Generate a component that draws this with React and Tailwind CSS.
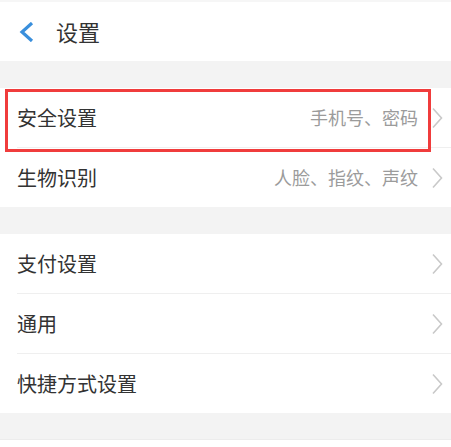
import React from "react";

const ChevronRight = () => (
  <svg width="12" height="22" viewBox="0 0 12 22" className="shrink-0">
    <path d="M2 1.5 L10.5 11 L2 20.5" fill="none" stroke="#c9c9c9" strokeWidth="1.6" />
  </svg>
);

const Row = ({ title, sub, last, highlight }) => (
  <div className="relative bg-white">
    <div className="h-[59px] flex items-center pl-[17px] pr-[8px]">
      <span className="flex-1 text-[20px] text-[#333333]">{title}</span>
      {sub && <span className="text-[18px] text-[#9b9b9b] mr-[13px]">{sub}</span>}
      <ChevronRight />
    </div>
    {!last && <div className="ml-[17px] h-px bg-[#efefef]" />}
    {highlight && (
      <div className="absolute z-10 left-[5px] top-[1px] w-[426px] h-[63px] border-[3px] border-solid border-[#f03c3c] pointer-events-none" />
    )}
  </div>
);

const App = () => {
  return (
    <div
      className="w-[451px] h-[447px] overflow-hidden bg-[#f3f3f3]"
      style={{ fontFamily: '"Noto Sans CJK SC", "Noto Sans", sans-serif' }}
    >
      {/* header */}
      <div className="h-[61px] bg-white flex items-center border-t-2 border-[#f6f6f6]">
        <svg width="16" height="20" viewBox="0 0 16 20" className="ml-[18px]">
          <path d="M14 1 L4 10 L14 19" fill="none" stroke="#3a8fdc" strokeWidth="3.2" />
        </svg>
        <span className="ml-[22px] text-[22px] text-[#333333]">设置</span>
      </div>

      <div className="h-[27px]" />

      <Row title="安全设置" sub="手机号、密码" highlight />
      <Row title="生物识别" sub="人脸、指纹、声纹" last />

      <div className="h-[27px]" />

      <Row title="支付设置" />
      <Row title="通用" />
      <Row title="快捷方式设置" last />

      <div className="h-[26px]" />
      <div className="h-[10px] bg-white border-t border-[#ececec]" />
    </div>
  );
};

export default App;
